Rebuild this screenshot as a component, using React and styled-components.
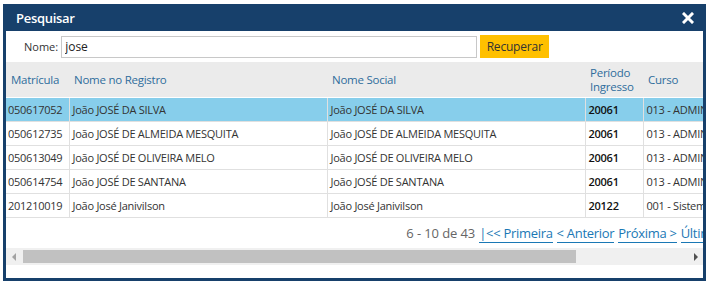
import React from 'react';
import styled, { createGlobalStyle } from 'styled-components';

const GlobalStyle = createGlobalStyle`
  html, body {
    margin: 0;
    padding: 0;
    background: #ffffff;
    font-family: "Open Sans", "Noto Sans", "Liberation Sans", sans-serif;
  }
`;

const Page = styled.div`
  padding: 4px 4px 0 3px;
`;

const Dialog = styled.div`
  width: 703px;
  height: 277px;
  box-sizing: border-box;
  background: #17406b;
  padding: 0 3px 3px 3px;
  display: flex;
  flex-direction: column;
`;

const TitleBar = styled.div`
  height: 27px;
  flex: none;
  display: flex;
  align-items: center;
  justify-content: space-between;
  padding: 0 9px 0 10px;
  color: #ffffff;
`;

const Title = styled.span`
  font-size: 13px;
  font-weight: 600;
  letter-spacing: -0.3px;
`;

const CloseButton = styled.button`
  background: transparent;
  border: none;
  padding: 0;
  width: 12px;
  height: 12px;
  display: flex;
  cursor: pointer;
`;

const Body = styled.div`
  flex: 1;
  background: #ffffff;
  display: flex;
  flex-direction: column;
  min-height: 0;
`;

const SearchRow = styled.div`
  height: 31px;
  flex: none;
  display: flex;
  align-items: center;
  gap: 3px;
  padding-left: 18px;
`;

const Label = styled.label`
  font-size: 11px;
  color: #333333;
`;

const SearchInput = styled.input`
  width: 416px;
  height: 22px;
  box-sizing: border-box;
  border: 1px solid #c8c8c8;
  padding: 0 3px;
  font-family: inherit;
  font-size: 12px;
  color: #222222;
  outline: none;
`;

const PrimaryButton = styled.button`
  width: 69px;
  height: 23px;
  border: none;
  background: #ffc000;
  color: #333333;
  font-family: inherit;
  font-size: 12px;
  letter-spacing: -0.2px;
  padding: 0;
  cursor: pointer;
`;

const Scroller = styled.div`
  overflow: hidden;
  flex: none;
`;

const Content = styled.div`
  width: 837px;
`;

const Table = styled.table`
  border-collapse: collapse;
  table-layout: fixed;
  width: 837px;
`;

const Th = styled.th`
  background: #ebebeb;
  color: #2f6d9c;
  font-weight: 400;
  font-size: 11.5px;
  letter-spacing: -0.25px;
  line-height: 14px;
  text-align: left;
  padding: 0 5px;
  height: 35px;
  border-bottom: 1px solid #ffffff;
`;

const Row = styled.tr`
  background: ${p => (p.$selected ? '#87ceeb' : '#ffffff')};
`;

const Td = styled.td`
  height: 23px;
  padding: 0 3px;
  font-size: 11px;
  letter-spacing: -0.25px;
  color: ${p => (p.$bold ? '#111111' : '#333333')};
  font-weight: ${p => (p.$bold ? 600 : 400)};
  border: 1px solid #e0e0e0;
  border-top: none;
  white-space: nowrap;
  overflow: hidden;

  &:first-child {
    border-left: none;
    padding-left: 2px;
  }
`;

const Pager = styled.div`
  display: flex;
  align-items: center;
  justify-content: flex-end;
  gap: 4px;
  height: 30px;
  padding-right: 100px;
  font-size: 13px;
`;

const PagerInfo = styled.span`
  color: #666666;
  letter-spacing: -0.1px;
`;

const PagerLink = styled.a`
  color: #1a78b5;
  text-decoration: none;
  border-bottom: 1px solid #1a78b5;
  line-height: 18px;
  letter-spacing: -0.3px;
  cursor: pointer;
`;

const ScrollBar = styled.div`
  height: 17px;
  flex: none;
  background: #f0f0f0;
  display: flex;
  align-items: center;
`;

const ScrollArrow = styled.div`
  width: 15px;
  height: 17px;
  display: flex;
  align-items: center;
  justify-content: center;
  flex: none;

  &::before {
    content: '';
    border-top: 4px solid transparent;
    border-bottom: 4px solid transparent;
    ${p =>
      p.$dir === 'left'
        ? 'border-right: 4px solid #a3a3a3;'
        : 'border-left: 4px solid #505050;'}
  }
`;

const Track = styled.div`
  flex: 1;
  height: 13px;
  display: flex;
  padding: 0 2px;
`;

const Thumb = styled.div`
  height: 13px;
  background: #c1c1c1;
`;

const columns = [
  { key: 'mat', label: 'Matrícula', width: 63 },
  { key: 'nome', label: 'Nome no Registro', width: 258 },
  { key: 'social', label: 'Nome Social', width: 258 },
  { key: 'periodo', label: <>Período<br />Ingresso</>, width: 58 },
  { key: 'curso', label: 'Curso', width: 200 },
];

const rows = [
  { mat: '050617052', nome: 'João JOSÉ DA SILVA', periodo: '20061', curso: '013 - ADMINISTRAÇÃO' },
  { mat: '050612735', nome: 'João JOSÉ DE ALMEIDA MESQUITA', periodo: '20061', curso: '013 - ADMINISTRAÇÃO' },
  { mat: '050613049', nome: 'João JOSÉ DE OLIVEIRA MELO', periodo: '20061', curso: '013 - ADMINISTRAÇÃO' },
  { mat: '050614754', nome: 'João JOSÉ DE SANTANA', periodo: '20061', curso: '013 - ADMINISTRAÇÃO' },
  { mat: '201210019', nome: 'João José Janivilson', periodo: '20122', curso: '001 - Sistemas de Informação' },
];

const thumbRatio = 0.834;

export default function App() {
  return (
    <Page>
      <GlobalStyle />
      <Dialog>
        <TitleBar>
          <Title>Pesquisar</Title>
          <CloseButton aria-label="Fechar">
            <svg width="12" height="12" viewBox="0 0 12 12">
              <path d="M2 2 L10 10 M10 2 L2 10" stroke="#ffffff" strokeWidth="3" strokeLinecap="square" />
            </svg>
          </CloseButton>
        </TitleBar>
        <Body>
          <SearchRow>
            <Label>Nome:</Label>
            <SearchInput defaultValue="jose" />
            <PrimaryButton>Recuperar</PrimaryButton>
          </SearchRow>
          <Scroller>
            <Content>
              <Table>
                <colgroup>
                  {columns.map(c => (
                    <col key={c.key} style={{ width: c.width }} />
                  ))}
                </colgroup>
                <thead>
                  <tr>
                    {columns.map(c => (
                      <Th key={c.key}>{c.label}</Th>
                    ))}
                  </tr>
                </thead>
                <tbody>
                  {rows.map((r, i) => (
                    <Row key={r.mat} $selected={i === 0}>
                      <Td>{r.mat}</Td>
                      <Td>{r.nome}</Td>
                      <Td>{r.nome}</Td>
                      <Td $bold>{r.periodo}</Td>
                      <Td>{r.curso}</Td>
                    </Row>
                  ))}
                </tbody>
              </Table>
              <Pager>
                <PagerInfo>6 - 10 de 43</PagerInfo>
                <PagerLink>|&lt;&lt; Primeira</PagerLink>
                <PagerLink>&lt; Anterior</PagerLink>
                <PagerLink>Próxima &gt;</PagerLink>
                <PagerLink>Última &gt;&gt;|</PagerLink>
              </Pager>
            </Content>
          </Scroller>
          <ScrollBar>
            <ScrollArrow $dir="left" />
            <Track>
              <Thumb style={{ width: `${thumbRatio * 100}%` }} />
            </Track>
            <ScrollArrow $dir="right" />
          </ScrollBar>
        </Body>
      </Dialog>
    </Page>
  );
}
